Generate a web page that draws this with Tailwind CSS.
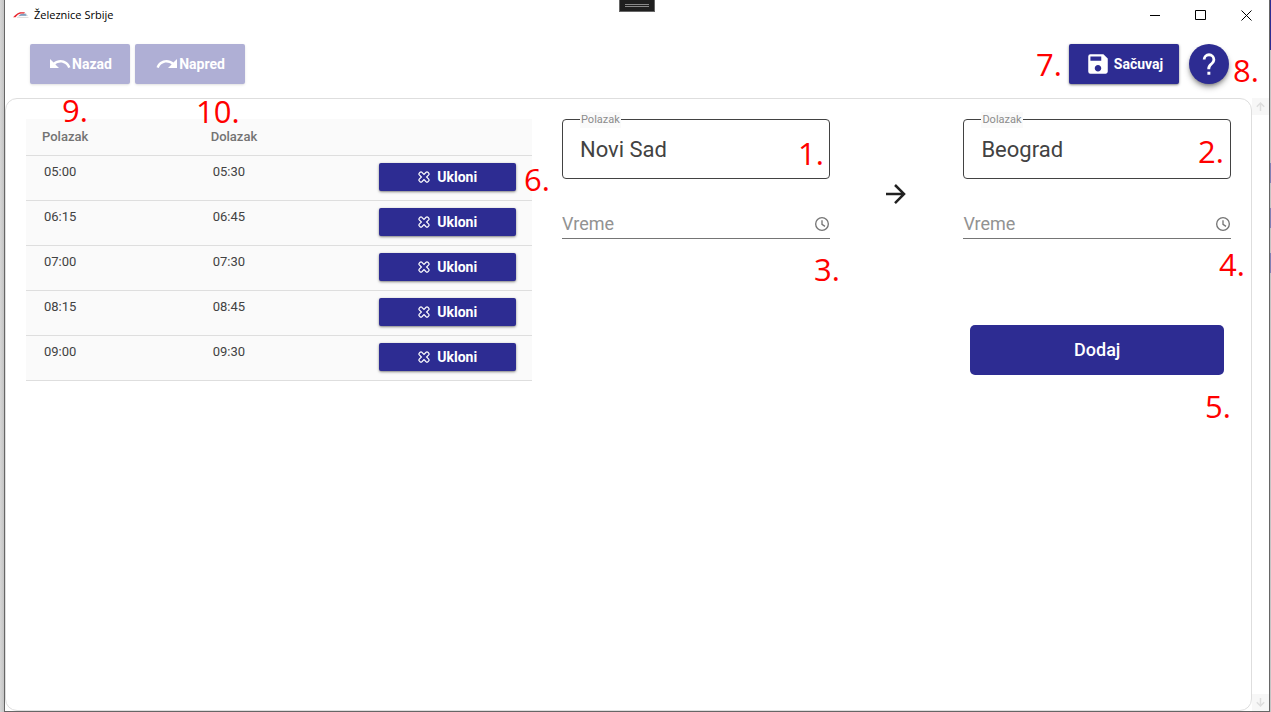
<!DOCTYPE html>
<html lang="sr-Latn">
<head>
<meta charset="utf-8">
<meta name="viewport" content="width=device-width, initial-scale=1">
<title>Železnice Srbije</title>
<script src="https://cdn.jsdelivr.net/npm/@tailwindcss/browser@4"></script>
</head>
<body class="relative flex min-h-screen bg-white font-['Roboto',sans-serif] text-[#424242]">

<svg class="hidden" aria-hidden="true">
  <symbol id="remove" viewBox="0 0 12 12"><path d="M3.900 1.300L6 3.400 8.100 1.300Q9 .5 9.900 1.300L10.700 2.100Q11.500 3 10.700 3.900L8.600 6 10.700 8.100Q11.500 9 10.700 9.900L9.900 10.700Q9 11.500 8.100 10.700L6 8.600 3.900 10.700Q3 11.500 2.100 10.700L1.300 9.900Q.5 9 1.300 8.100L3.400 6 1.300 3.900Q.5 3 1.300 2.100L2.100 1.300Q3 .5 3.900 1.300z" fill="none" stroke="currentColor" stroke-width="1.200"/></symbol>
</svg>

<div class="w-1 shrink-0 bg-linear-to-r from-[#d6d6d6] to-[#c4c4c4]"></div>

<div class="flex min-w-0 flex-1 flex-col border-x border-b border-[#666] bg-white">
  <header class="flex h-[30px] shrink-0 items-center justify-between pl-2 font-['Open_Sans',sans-serif] text-black">
    <div class="flex items-center gap-[5px]">
      <svg class="h-4 w-4" viewBox="0 0 16 16" fill="none" aria-hidden="true">
        <path d="M5 9.500C7 6.500 9 5.500 13 6.200L15 9H8z" fill="#d5d9de"/>
        <path d="M5.500 9.200L8 7H12.500L13.500 8.700H8.500z" fill="#7d9fc0"/>
        <path d="M0 10.300C2.500 8 4.500 5.300 8.500 5.300H12L11 6.600H8C5.500 6.600 4 9 2.500 10.300z" fill="#e8282f"/>
        <path d="M4 10.400H15.500" stroke="#dddddd"/>
      </svg>
      <h1 class="text-[11px] leading-4">Železnice Srbije</h1>
    </div>
    <div class="flex h-full">
      <button type="button" aria-label="Minimize" class="flex w-[46px] items-center justify-center"><svg class="h-[11px] w-[11px]" viewBox="0 0 11 11" stroke="black"><path d="M0 5.500H10"/></svg></button>
      <button type="button" aria-label="Maximize" class="flex w-[45px] items-center justify-center"><svg class="h-[11px] w-[11px]" viewBox="0 0 11 11" stroke="black" fill="none"><path d="M.5.5H10.500V9.500H.5z"/></svg></button>
      <button type="button" aria-label="Close" class="flex w-[46px] items-center justify-center"><svg class="h-[11px] w-[11px]" viewBox="0 0 11 11" stroke="black"><path d="M.5.5L10.500 10.500M10.500.5L.5 10.500"/></svg></button>
    </div>
  </header>

  <nav class="flex h-[68px] shrink-0 justify-between pt-[14px] pr-10 pl-[25px] text-sm font-bold text-white">
    <div class="flex h-10 gap-[5px]">
      <button type="button" disabled class="flex w-[100px] items-center justify-center rounded-xs bg-[#afafd5] shadow-sm">
        <svg class="h-6 w-6" viewBox="0 0 24 24" fill="currentColor" aria-hidden="true"><path d="M12.500 8c-2.650 0-5.050 1-6.900 2.600L2 7v9h9l-3.620-3.620c1.390-1.160 3.160-1.880 5.120-1.880 3.540 0 6.550 2.310 7.600 5.500l2.370-.78C21.080 11.030 17.150 8 12.500 8z"/></svg>
        <span>Nazad</span>
      </button>
      <button type="button" disabled class="flex w-[110px] items-center justify-center rounded-xs bg-[#afafd5] shadow-sm">
        <svg class="h-6 w-6" viewBox="0 0 24 24" fill="currentColor" aria-hidden="true"><path d="M18.400 10.600C16.550 8.990 14.150 8 11.500 8c-4.650 0-8.580 3.030-9.960 7.220L3.900 16c1.050-3.190 4.050-5.500 7.600-5.500 1.950 0 3.730.72 5.120 1.880L13 16h9V7l-3.600 3.600z"/></svg>
        <span>Napred</span>
      </button>
    </div>
    <div class="flex h-10 gap-[10px]">
      <button type="button" class="flex w-[110px] items-center justify-center gap-[3px] rounded-xs bg-[#2d2c92] shadow-sm shadow-black/40">
        <svg class="h-[26px] w-[26px]" viewBox="0 0 24 24" fill="currentColor" aria-hidden="true"><path d="M17 3H5a2 2 0 0 0-2 2v14a2 2 0 0 0 2 2h14c1.100 0 2-.9 2-2V7l-4-4zm-5 16c-1.660 0-3-1.340-3-3s1.340-3 3-3 3 1.340 3 3-1.340 3-3 3zm3-10H5V5h10v4z"/></svg>
        <span>Sačuvaj</span>
      </button>
      <button type="button" aria-label="Pomoć" class="flex w-10 items-center justify-center rounded-full bg-[#2d2c92] shadow-md shadow-black/40">
        <svg class="h-8 w-8" viewBox="0 0 24 24" fill="currentColor" aria-hidden="true"><path d="M10.800 17.800h2.200V20h-2.200zM12 4a4.700 4.700 0 0 0-4.700 4.700h2.100a2.600 2.600 0 0 1 5.200 0c0 2.600-3.900 3.100-3.900 7.300H12.900c0-3.300 3.800-3.700 3.800-7.300A4.700 4.700 0 0 0 12 4z"/></svg>
      </button>
    </div>
  </nav>

  <div class="flex flex-1">
    <main class="flex-1 rounded-xl border border-[#dedede] px-5 pt-5">
      <div class="grid grid-cols-[506fr_669fr] items-start gap-[30px]">
        <table class="w-full table-fixed bg-[#fafafa] text-left text-[13px] leading-4">
          <colgroup><col class="w-1/3"><col class="w-1/3"><col class="w-1/3"></colgroup>
          <thead>
            <tr class="h-9 border-b border-[#dedede] text-[#737373]">
              <th scope="col" class="pl-4 font-medium">Polazak</th>
              <th scope="col" class="pl-4 font-medium">Dolazak</th>
              <td></td>
            </tr>
          </thead>
          <tbody class="align-top">
            <tr class="h-[45px] border-b border-[#dedede]"><td class="pt-2 pl-[18px]">05:00</td><td class="pt-2 pl-[18px]">05:30</td><td class="px-4 pt-[7px]"><button type="button" class="flex h-7 w-full items-center justify-center gap-[7px] rounded-xs bg-[#2d2c92] text-sm font-bold text-white shadow-sm shadow-black/40"><svg class="h-3 w-3" aria-hidden="true"><use href="#remove"/></svg>Ukloni</button></td></tr>
            <tr class="h-[45px] border-b border-[#dedede]"><td class="pt-2 pl-[18px]">06:15</td><td class="pt-2 pl-[18px]">06:45</td><td class="px-4 pt-[7px]"><button type="button" class="flex h-7 w-full items-center justify-center gap-[7px] rounded-xs bg-[#2d2c92] text-sm font-bold text-white shadow-sm shadow-black/40"><svg class="h-3 w-3" aria-hidden="true"><use href="#remove"/></svg>Ukloni</button></td></tr>
            <tr class="h-[45px] border-b border-[#dedede]"><td class="pt-2 pl-[18px]">07:00</td><td class="pt-2 pl-[18px]">07:30</td><td class="px-4 pt-[7px]"><button type="button" class="flex h-7 w-full items-center justify-center gap-[7px] rounded-xs bg-[#2d2c92] text-sm font-bold text-white shadow-sm shadow-black/40"><svg class="h-3 w-3" aria-hidden="true"><use href="#remove"/></svg>Ukloni</button></td></tr>
            <tr class="h-[45px] border-b border-[#dedede]"><td class="pt-2 pl-[18px]">08:15</td><td class="pt-2 pl-[18px]">08:45</td><td class="px-4 pt-[7px]"><button type="button" class="flex h-7 w-full items-center justify-center gap-[7px] rounded-xs bg-[#2d2c92] text-sm font-bold text-white shadow-sm shadow-black/40"><svg class="h-3 w-3" aria-hidden="true"><use href="#remove"/></svg>Ukloni</button></td></tr>
            <tr class="h-[45px] border-b border-[#dedede]"><td class="pt-2 pl-[18px]">09:00</td><td class="pt-2 pl-[18px]">09:30</td><td class="px-4 pt-[7px]"><button type="button" class="flex h-7 w-full items-center justify-center gap-[7px] rounded-xs bg-[#2d2c92] text-sm font-bold text-white shadow-sm shadow-black/40"><svg class="h-3 w-3" aria-hidden="true"><use href="#remove"/></svg>Ukloni</button></td></tr>
          </tbody>
        </table>

        <form class="grid grid-cols-[2fr_1fr_2fr]">
          <div>
            <div class="relative">
              <label for="from" class="absolute -top-[7px] left-[18px] bg-[#fafafa] px-px text-[11px] leading-4 text-[#8c8c8c]">Polazak</label>
              <input id="from" type="text" value="Novi Sad" class="h-[60px] w-full rounded-[4px] border border-[#424242] pr-4 pl-[17px] text-[22px]">
            </div>
            <div class="mt-[30px] flex h-[30px] items-center border-b border-[#757575]">
              <input id="from-time" type="text" aria-label="Vreme polaska" placeholder="Vreme" class="min-w-0 flex-1 text-lg placeholder:text-[#929292]">
              <button type="button" aria-label="Izaberi vreme polaska"><svg class="h-4 w-4" viewBox="0 0 24 24" fill="none" stroke="#757575" stroke-width="2"><circle cx="12" cy="12" r="9.500"/><path d="M12 6.500V12.500L16.500 15.500"/></svg></button>
            </div>
          </div>
          <div class="flex h-[150px] items-center justify-center">
            <svg class="h-[30px] w-[30px]" viewBox="0 0 24 24" fill="#212121" aria-hidden="true"><path d="M4 11v2h12l-5.500 5.500 1.420 1.420L19.840 12l-7.920-7.920L10.500 5.500 16 11z"/></svg>
          </div>
          <div>
            <div class="relative">
              <label for="to" class="absolute -top-[7px] left-[18px] bg-[#fafafa] px-px text-[11px] leading-4 text-[#8c8c8c]">Dolazak</label>
              <input id="to" type="text" value="Beograd" class="h-[60px] w-full rounded-[4px] border border-[#424242] pr-4 pl-[17px] text-[22px]">
            </div>
            <div class="mt-[30px] flex h-[30px] items-center border-b border-[#757575]">
              <input id="to-time" type="text" aria-label="Vreme dolaska" placeholder="Vreme" class="min-w-0 flex-1 text-lg placeholder:text-[#929292]">
              <button type="button" aria-label="Izaberi vreme dolaska"><svg class="h-4 w-4" viewBox="0 0 24 24" fill="none" stroke="#757575" stroke-width="2"><circle cx="12" cy="12" r="9.500"/><path d="M12 6.500V12.500L16.500 15.500"/></svg></button>
            </div>
            <div class="px-[7px] pt-[86px]">
              <button type="button" class="h-[50px] w-full rounded-[5px] bg-[#2d2c92] text-lg font-medium text-white">Dodaj</button>
            </div>
          </div>
        </form>
      </div>
    </main>
    <div class="flex w-[17px] flex-col justify-between">
      <button type="button" aria-label="Gore" class="flex h-[17px] items-center justify-center bg-[#f7f7f7]"><svg class="h-[9px] w-[9px]" viewBox="0 0 9 9" fill="none" stroke="#dedede" stroke-width="1.500"><path d="M4.500 9V1M.8 4.700L4.500 1l3.700 3.700"/></svg></button>
      <button type="button" aria-label="Dole" class="flex h-[17px] items-center justify-center bg-[#f7f7f7]"><svg class="h-[9px] w-[9px]" viewBox="0 0 9 9" fill="none" stroke="#dedede" stroke-width="1.500"><path d="M4.500 0v8M.8 4.300L4.500 8l3.700-3.700"/></svg></button>
    </div>
  </div>
</div>

<!-- Sliver of the window behind -->
<div class="flex w-px shrink-0 flex-col bg-[#c4c4c4]">
  <div class="h-[50px] bg-[#2d2c92]"></div>
  <div class="mt-[113px] h-5 bg-[#8080b4]"></div>
  <div class="mt-[25px] h-5 bg-[#8080b4]"></div>
  <div class="mt-[25px] h-5 bg-[#8080b4]"></div>
</div>

<!-- Debug toolbar tab -->
<div class="absolute top-0 left-[619px] flex h-3 w-9 flex-col items-center gap-px border-x border-b border-[#666] bg-[#1f1f1f] pt-1">
  <div class="h-px w-6 bg-[#888]"></div>
  <div class="h-px w-6 bg-[#888]"></div>
</div>

<!-- Numbered callouts -->
<div class="pointer-events-none absolute inset-0 font-['Open_Sans',sans-serif] text-[31px] leading-6 text-[#ff0000]">
  <span class="absolute top-[141px] left-[798px]">1.</span>
  <span class="absolute top-[139px] left-[1198px]">2.</span>
  <span class="absolute top-[257px] left-[814px]">3.</span>
  <span class="absolute top-[252px] left-[1219px]">4.</span>
  <span class="absolute top-[394px] left-[1205px]">5.</span>
  <span class="absolute top-[167px] left-[524px]">6.</span>
  <span class="absolute top-[52px] left-[1036px]">7.</span>
  <span class="absolute top-[58px] left-[1233px]">8.</span>
  <span class="absolute top-[98px] left-[62px]">9.</span>
  <span class="absolute top-[99px] left-[196px]">10.</span>
</div>
</body>
</html>
